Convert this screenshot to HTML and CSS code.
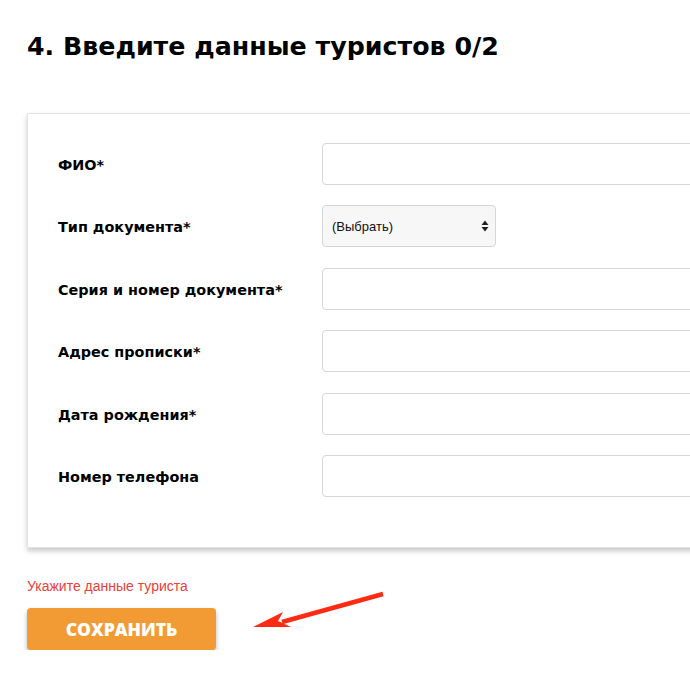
FILE: index.html
```html
<!DOCTYPE html>
<html lang="ru">
<head>
  <meta charset="UTF-8">
  <meta name="viewport" content="width=device-width, initial-scale=1.0">
  <title>Данные туристов</title>
  <link rel="stylesheet" href="styles.css">
</head>
<body>
  <div class="page">
    <h2 class="step-title">4. Введите данные туристов 0/2</h2>

    <div class="tourist-card">
      <div class="field">
        <label>ФИО*</label>
        <input type="text" class="input">
      </div>
      <div class="field">
        <label>Тип документа*</label>
        <div class="select">
          <span>(Выбрать)</span>
          <svg class="select-arrows" width="8" height="12" viewBox="0 0 8 12">
            <path d="M4 0.5 L7.5 5 L0.5 5 Z M4 11.5 L7.5 7 L0.5 7 Z" fill="#222"/>
          </svg>
        </div>
      </div>
      <div class="field">
        <label>Серия и номер документа*</label>
        <input type="text" class="input">
      </div>
      <div class="field">
        <label>Адрес прописки*</label>
        <input type="text" class="input">
      </div>
      <div class="field">
        <label>Дата рождения*</label>
        <input type="text" class="input">
      </div>
      <div class="field">
        <label>Номер телефона</label>
        <input type="text" class="input">
      </div>
    </div>

    <p class="error">Укажите данные туриста</p>
    <button class="save-btn">СОХРАНИТЬ</button>

    <svg class="hint-arrow" width="140" height="45" viewBox="0 0 140 45">
      <path d="M134 5 L33 33" stroke="#ff2a12" stroke-width="4.5"/>
      <path d="M4 38 L34 23 L29 32 L42 38 Z" fill="#ff2a12"/>
    </svg>
  </div>
</body>
</html>
```

FILE: styles.css
```css
html, body {
  margin: 0;
  padding: 0;
  overflow: hidden;
  background: #fff;
}
.page {
  position: relative;
  padding: 0 0 0 27px;
  font-family: "DejaVu Sans", Verdana, sans-serif;
  color: #000;
}
.step-title {
  margin: 0;
  padding-top: 29px;
  font-size: 25.3px;
  font-weight: bold;
  line-height: 36px;
}
.tourist-card {
  margin-top: 48px;
  width: 720px;
  box-sizing: border-box;
  background: #fff;
  border: 1px solid #e4e4e4;
  box-shadow: 0 3px 5px rgba(0, 0, 0, 0.22);
  padding: 29px 0 50px 30px;
  display: flex;
  flex-direction: column;
  gap: 20.4px;
}
.field {
  display: flex;
  align-items: center;
  height: 42px;
}
.field label {
  width: 264px;
  flex-shrink: 0;
  font-size: 14.4px;
  font-weight: bold;
  padding-top: 2px;
}
.input {
  box-sizing: border-box;
  height: 42px;
  width: 420px;
  border: 1px solid #d6d6d6;
  border-radius: 4px;
  background: #fff;
  margin: 0;
}
.select {
  box-sizing: border-box;
  height: 42px;
  width: 174px;
  border: 1px solid #d6d6d6;
  border-radius: 4px;
  background: #f7f7f7;
  display: flex;
  align-items: center;
  justify-content: space-between;
  padding: 0 6px 0 9px;
  font-family: "Liberation Sans", Arial, sans-serif;
  font-size: 13px;
  color: #111;
}
.error {
  margin: 29px 0 0;
  font-family: "Liberation Sans", Arial, sans-serif;
  font-size: 14px;
  line-height: 18px;
  color: #e8403a;
}
.save-btn {
  margin-top: 13px;
  width: 189px;
  height: 42px;
  border: none;
  border-radius: 4px;
  background: #f29b35;
  color: #fff;
  font-family: "Open Sans", sans-serif;
  font-weight: 800;
  font-size: 17.5px;
  box-shadow: 0 3px 5px rgba(0, 0, 0, 0.28);
  cursor: pointer;
}
.hint-arrow {
  position: absolute;
  left: 249px;
  top: 589px;
}
```
